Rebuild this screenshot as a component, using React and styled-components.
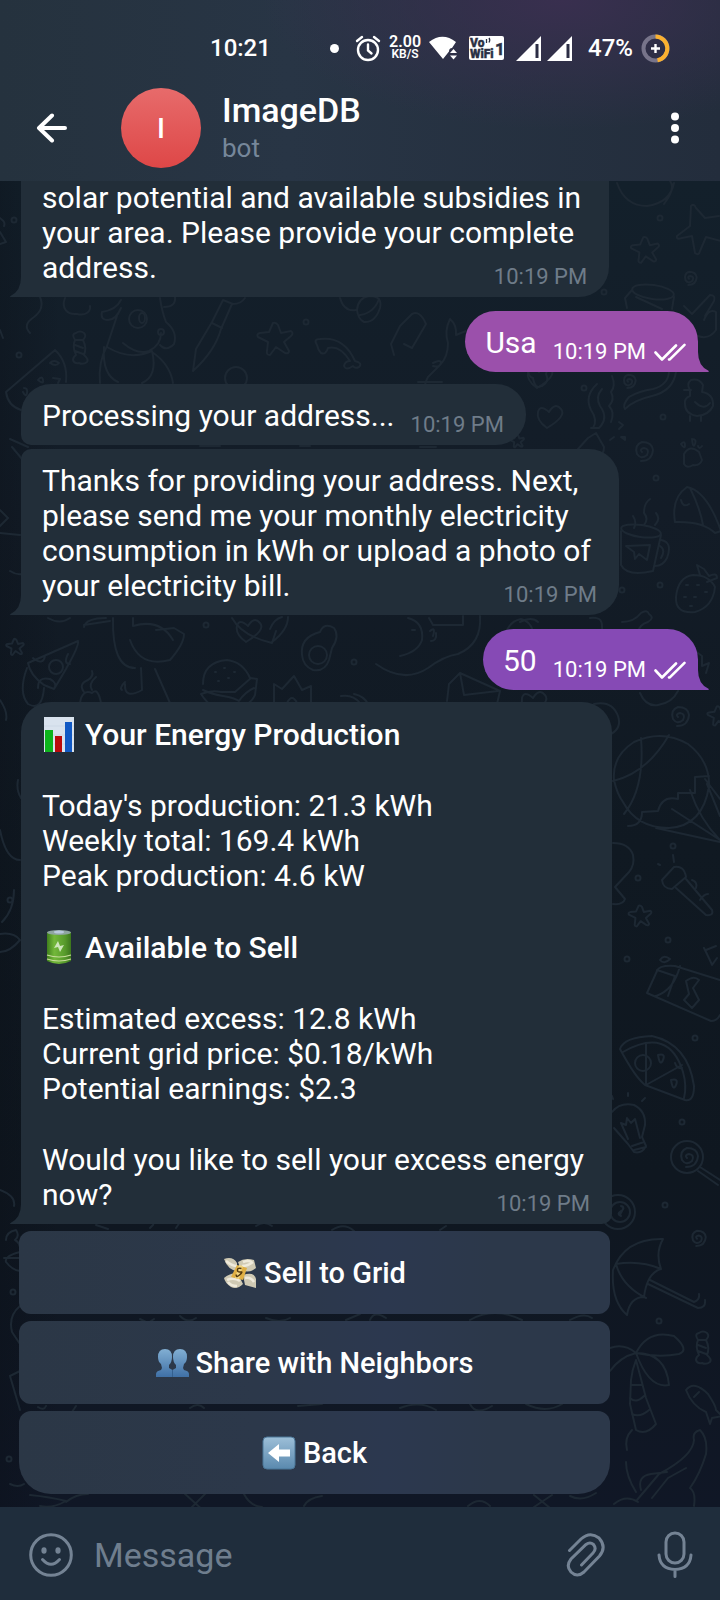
import React from "react";
import styled, { createGlobalStyle, css } from "styled-components";

const GlobalStyle = createGlobalStyle`
  *, *::before, *::after { box-sizing: border-box; }
  html, body { margin: 0; background: #101822; }
  body { font-family: Roboto, "Noto Sans", sans-serif; color: #fff; }
  button, input { font: inherit; color: inherit; }
`;

const App = styled.div`
  display: flex;
  flex-direction: column;
  height: 100vh;
  overflow: hidden;
`;

/* ---------- header ---------- */

const Header = styled.header`
  flex: none;
  background:
    radial-gradient(ellipse 300px 130px at 78% 0, #392f4f 0%, rgba(57, 47, 79, 0) 100%),
    linear-gradient(90deg, #25323e 0%, #283545 40%, #232d3c 100%);
`;

const StatusBar = styled.div`
  display: flex;
  align-items: center;
  justify-content: space-between;
  height: 75px;
  padding: 21px 50px 0 210px;
  font-size: 24px;
  line-height: 28px;
  font-weight: 500;
`;

const StatusIcons = styled.div`
  display: flex;
  align-items: center;
  gap: 12px;
`;

const IconGroup = styled.div`
  display: flex;
  align-items: center;
  gap: ${({ $gap = 8 }) => $gap}px;
  padding-left: ${({ $lead = 0 }) => $lead}px;
`;

const Speed = styled.div`
  display: flex;
  flex-direction: column;
  align-items: center;
  font-size: 16px;
  line-height: 12px;
  font-weight: 600;
`;

const SpeedUnit = styled.span`
  font-size: 12px;
`;

const TitleBar = styled.div`
  display: flex;
  align-items: center;
  height: 106px;
  padding: 0 29px 0 30px;
`;

const IconButton = styled.button`
  display: flex;
  align-items: center;
  justify-content: center;
  flex: none;
  width: ${({ $width = 44 }) => $width}px;
  height: 48px;
  padding: 0;
  border: 0;
  background: none;
  cursor: pointer;
`;

const Avatar = styled.div`
  display: flex;
  align-items: center;
  justify-content: center;
  flex: none;
  width: 80px;
  height: 80px;
  margin: 0 21px 0 47px;
  border-radius: 50%;
  background: linear-gradient(#e76b6b, #de4747);
  font-size: 28px;
  font-weight: 500;
`;

const Identity = styled.div`
  flex: 1;
  min-width: 0;
`;

const Name = styled.h1`
  margin: 0;
  font-size: 34px;
  line-height: 40px;
  font-weight: 500;
`;

const Role = styled.p`
  margin: 0;
  font-size: 26px;
  line-height: 36px;
  color: #76879a;
`;

/* ---------- conversation ---------- */

const Chat = styled.main`
  position: relative;
  display: flex;
  flex: 1;
  flex-direction: column;
  justify-content: flex-end;
  min-height: 0;
  padding: 0 22px 13px 21px;
  overflow: hidden;
  background:
    linear-gradient(90deg, rgba(9, 13, 20, 0.3) 0, rgba(9, 13, 20, 0) 60px),
    linear-gradient(180deg, #13202b 0%, #131c27 25%, #101922 50%, #0f1720 75%, #101726 100%);
`;

const Wallpaper = styled.svg`
  position: absolute;
  inset: 0;
  width: 100%;
  height: 100%;
  fill: none;
  stroke: #1d2833;
  stroke-width: 2;
  stroke-linecap: round;
  stroke-linejoin: round;
`;

const SENT_GAP = 14;
const RECEIVED_GAP = 12;
const GROUP_GAP = 4;

const Bubble = styled.article`
  position: relative;
  display: grid;
  align-self: flex-start;
  flex: none;
  max-width: calc(100% - 60px);
  margin-top: ${({ $grouped }) => ($grouped ? GROUP_GAP : RECEIVED_GAP)}px;
  padding: 14px 28px 12px 21px;
  border-radius: ${({ $radius = "30px 30px 30px 0" }) => $radius};
  background: #222e39;
  font-size: 30px;
  line-height: 35px;

  ${({ $inline }) =>
    $inline &&
    css`
      grid-template-columns: auto auto;
      column-gap: 16px;
    `}

  ${({ $cut }) =>
    $cut &&
    css`
      margin-top: 0;
      padding-top: 2px;
    `}
`;

const SentBubble = styled(Bubble)`
  align-self: flex-end;
  margin-top: ${SENT_GAP}px;
  padding-right: 12px;
  padding-left: 20px;
  border-radius: 31px 31px 0 31px;
  background: ${({ $tint }) => $tint};
`;

const Text = styled.div`
  display: flex;
  flex-direction: column;
  grid-area: 1 / 1;
  gap: 36px;
`;

const Paragraph = styled.p`
  margin: 0;
`;

const Line = styled.span`
  display: block;
  width: fit-content;
`;

const Heading = styled.h2`
  display: flex;
  align-items: center;
  gap: 9px;
  margin: 0;
  font-size: 30px;
  line-height: 35px;
  font-weight: 500;
`;

const Stamp = styled.div`
  display: flex;
  align-items: center;
  grid-area: ${({ $inline }) => ($inline ? "1 / 2" : "1 / 1")};
  align-self: end;
  justify-self: end;
  gap: 8px;
  margin: 0 -6px -5px 0;
  font-size: 22px;
  line-height: 26px;
  color: #6f7c89;
`;

const SentStamp = styled(Stamp)`
  margin-right: 0;
  color: #fff;
`;

const Tail = styled.svg`
  position: absolute;
  bottom: 0;
  ${({ $side }) => ($side === "right" ? "left: 100%;" : "right: 100%;")}
  width: 11px;
  height: 20px;
`;

const Keyboard = styled.div`
  position: relative;
  display: flex;
  flex: none;
  flex-direction: column;
  gap: 7px;
  width: 591px;
  max-width: 100%;
  margin: 7px 0 0 -2px;
`;

const ReplyButton = styled.button`
  display: flex;
  align-items: center;
  justify-content: center;
  gap: 7px;
  height: 83px;
  padding: 0;
  border: 0;
  border-radius: 12px;
  background: linear-gradient(90deg, #2b3746 0%, #2c384a 40%, #2c384f 62%, #2c384a 80%);
  font-size: 29px;
  font-weight: 500;
  cursor: pointer;

  &:last-child {
    border-radius: 12px 12px 32px 32px;
  }
`;

/* ---------- composer ---------- */

const Composer = styled.form`
  display: flex;
  align-items: center;
  flex: none;
  height: 93px;
  padding: 2px 23px 0 29px;
  background: #1f2d3c;
  color: #748394;
`;

const MessageInput = styled.input`
  flex: 1;
  min-width: 0;
  margin: 0 21px;
  padding: 0;
  border: 0;
  outline: 0;
  background: none;
  font-size: 34px;
  line-height: 40px;

  &::placeholder {
    color: #6f7e8e;
    opacity: 1;
  }
`;

const ComposerActions = styled.div`
  display: flex;
  gap: 45px;
`;

/* ---------- icons ---------- */

const AlarmIcon = () => (
  <svg width="26" height="27" viewBox="0 0 26 27" fill="none" stroke="#fff" strokeWidth="2.4" strokeLinecap="round">
    <circle cx="13" cy="15" r="10" />
    <path d="M13 9.5v6l3.5 3M2 6l5-4M24 6l-5-4" />
  </svg>
);

const WifiIcon = () => (
  <svg width="28" height="24" viewBox="0 0 28 24" fill="#fff">
    <path d="M0 6Q13.500-4.500 27 6L23 12Q20 12 20 15.500L14 23Z" />
    <path d="M21 17l3.500-4 3.500 4zM21 19.500l3.500 4 3.500-4z" />
  </svg>
);

const BadgeIcon = () => (
  <svg width="35" height="24" viewBox="0 0 35 24">
    <rect width="35" height="24" rx="2" fill="#fff" />
    <g fill="#2b3044" stroke="#2b3044" strokeWidth="0.4" fontFamily="Roboto, sans-serif" fontWeight="900">
      <text x="1" y="11" fontSize="12">Vo</text>
      <text x="1" y="22" fontSize="12">WiFi</text>
      <text x="26" y="19" fontSize="17" fontWeight="700">1</text>
    </g>
    <path d="M17.500 3v4M20 2q1.500 2 0 4.500" fill="none" stroke="#2b3044" strokeWidth="1.300" />
  </svg>
);

const SignalIcon = () => (
  <svg width="25" height="25" viewBox="0 0 25 25">
    <path d="M0 25L25 0V25Z" fill="#fff" />
    <path d="M21 8V22" stroke="#2b2d44" strokeWidth="3" />
  </svg>
);

const BatteryRing = () => (
  <svg width="29" height="29" viewBox="0 0 29 29" fill="none">
    <circle cx="14.5" cy="14.5" r="12" stroke="#77748a" strokeWidth="4" />
    <path d="M14.500 2.500A12 12 0 0 1 16.500 26.300" stroke="#fbb130" strokeWidth="4" />
    <path d="M14.500 10v9M10 14.500h9" stroke="#fff" strokeWidth="2.400" />
  </svg>
);

const BackArrow = () => (
  <svg width="32" height="30" viewBox="0 0 32 30" fill="none" stroke="#fff" strokeWidth="4" strokeLinecap="round" strokeLinejoin="round">
    <path d="M16 2.500L3 15l13 12.500M3 15h26" />
  </svg>
);

const DotsIcon = () => (
  <svg width="8" height="32" viewBox="0 0 8 32" fill="#fff">
    <circle cx="4" cy="4.5" r="4" />
    <circle cx="4" cy="16" r="4" />
    <circle cx="4" cy="27.5" r="4" />
  </svg>
);

const DoubleCheck = () => (
  <svg width="32" height="19" viewBox="0 0 32 19" fill="none" stroke="#fff" strokeWidth="2.600" strokeLinecap="round" strokeLinejoin="round">
    <path d="M1.500 9.500l6.500 7L22 2.500M15 16.500l.8-.1L30.500 1.800" />
  </svg>
);

const ReceivedTail = ({ fill = "#222e39" }) => (
  <Tail $side="left" viewBox="0 0 11 20" fill={fill}>
    <path d="M11 0V20H1Q-.5 20 .5 19Q11 14 11 0Z" />
  </Tail>
);

const SentTail = ({ fill }) => (
  <Tail $side="right" viewBox="0 0 11 20" fill={fill}>
    <path d="M0 0V20H10Q11.500 20 10.500 18.800Q0 14 0 0Z" />
  </Tail>
);

const SmileIcon = () => (
  <svg width="44" height="44" viewBox="0 0 44 44" fill="none" stroke="currentColor" strokeWidth="3" strokeLinecap="round">
    <circle cx="22" cy="22" r="20.300" />
    <path d="M13.500 26.500q8.500 9.500 17 0" />
    <ellipse cx="15" cy="17.500" rx="2.600" ry="3.200" fill="currentColor" stroke="none" />
    <ellipse cx="29" cy="17.500" rx="2.600" ry="3.200" fill="currentColor" stroke="none" />
  </svg>
);

const ClipIcon = () => (
  <svg width="40" height="46" viewBox="0 0 40 46" fill="none" stroke="currentColor" strokeWidth="3" strokeLinecap="round">
    <path d="M3.500 18.500L15 7Q24-1 33 6Q41 15 33.500 24L18 40Q11 46 5 40Q-.5 34 5 27L20 12.500Q24 9.500 27.500 12.500Q31 17 27 21L15.500 33" />
  </svg>
);

const MicIcon = () => (
  <svg width="36" height="48" viewBox="0 0 36 48" fill="none" stroke="currentColor" strokeWidth="3" strokeLinecap="round">
    <rect x="9" y="2" width="18" height="30" rx="9" />
    <path d="M2 24q1 14 16 14.500Q33 38 34 24M18 38.500v7" />
  </svg>
);

const ChartEmoji = () => (
  <svg width="34" height="36" viewBox="0 0 34 36">
    <rect x="2" y="1" width="30" height="35" fill="#d9e3ee" />
    <path d="M2 10h30M2 19h30M2 28h30" stroke="#cdd9e6" />
    <rect x="3" y="14" width="8" height="22" fill="#0db41c" />
    <rect x="13" y="20" width="7" height="16" fill="#ba0b0b" />
    <rect x="23" y="6" width="7" height="30" fill="#1159c4" />
  </svg>
);

const BatteryEmoji = () => (
  <svg width="34" height="36" viewBox="0 0 34 36">
    <defs>
      <linearGradient id="cell" x1="0" x2="1">
        <stop offset="0" stopColor="#3f7f1c" />
        <stop offset="0.3" stopColor="#73b83a" />
        <stop offset="0.75" stopColor="#579a2b" />
        <stop offset="1" stopColor="#3c761c" />
      </linearGradient>
    </defs>
    <path d="M5 3v29q12 6 24 0V3z" fill="url(#cell)" />
    <ellipse cx="17" cy="3.500" rx="12" ry="2.500" fill="#8fa6a0" />
    <ellipse cx="17" cy="3" rx="5" ry="1.500" fill="#b9c9dc" />
    <path d="M5 26q12 4 24 0M5 30q12 4 24 0" fill="none" stroke="#c8dd9c" strokeWidth="1.200" />
    <path d="M16 12l-4 7 4-1 2 5 4-7-4 1z" fill="#cfe6bb" />
  </svg>
);

const MoneyEmoji = () => (
  <svg width="34" height="32" viewBox="0 0 34 32">
    <path d="M1 2Q10-1 14 6L14 14Q5 13 1 2ZM15 5Q22 0 31 3L33 11Q26 17 18 13ZM1 21Q8 15 15 17L20 27Q14 33 8 30Q2 26 1 21ZM20 18Q31 14 33 22V31L22 28Z" fill="#cfc9b3" />
    <path d="M3 4q6 5 11 5M19 9q6 0 11-4M4 23q7-3 13 1M22 21q6-1 9 4M14 29q-6 0-9-4M20 5q5-2 9 0" fill="none" stroke="#efeadb" strokeWidth="2.500" />
    <path d="M14 8l10 3-4 12-12-3z" fill="#e0af43" />
    <path d="M16 8l4 1-4 13-4-1z" fill="#f3d782" />
    <path d="M18.500 11.500q-4-1-4 1.500t3 2-1 3-3-.5" fill="none" stroke="#54390e" strokeWidth="1.500" />
  </svg>
);

const PeopleEmoji = () => (
  <svg width="33" height="30" viewBox="0 0 33 30">
    <defs>
      <linearGradient id="bust" x2="0" y2="1">
        <stop offset="0" stopColor="#82afd3" />
        <stop offset="1" stopColor="#3f70a6" />
      </linearGradient>
    </defs>
    <path d="M0 29v-3q0-3 5-4l1-2-1-4Q2 14 2 9Q2 1 9 1t7 8q0 5-3 8v3l3.500 2 3.500-2v-3q-3-3-3-8 0-8 7-8t7 8q0 5-3 7l-1 4 1 2q5 1 5 4v3z" fill="url(#bust)" />
    <path d="M16.500 22v7" stroke="#34608f" strokeWidth="1" />
  </svg>
);

const BackEmoji = () => (
  <svg width="34" height="34" viewBox="0 0 34 34">
    <defs>
      <linearGradient id="key" x2="0" y2="1">
        <stop offset="0" stopColor="#9dbfd8" />
        <stop offset="1" stopColor="#5a89ae" />
      </linearGradient>
    </defs>
    <rect x="1" y="1" width="32" height="32" rx="4" fill="url(#key)" stroke="#4b7698" />
    <path d="M6 17L17 8v5.500h11v7H17V26z" fill="#fff" />
  </svg>
);

/* ---------- wallpaper doodles ---------- */

const Star = ({ x, y, s = 1 }) => (
  <path transform={`translate(${x} ${y}) scale(${s})`} vectorEffect="non-scaling-stroke"
    d="M-2-16q3-1 5 2l3 8 10-2q3 2 0 5l-7 6 5 9q0 3-4 2l-9-6-6 8q-4 0-3-4l1-9-10-5q-2-3 2-4l9-1z" />
);
const Heart = ({ x, y }) => <path transform={`translate(${x} ${y})`} d="M-3 12Q-14 4-12-4T-1-4Q5-14 11-7T-3 12Z" />;
const Spiral = ({ x, y, s = 1 }) => (
  <path transform={`translate(${x} ${y}) scale(${s})`} vectorEffect="non-scaling-stroke"
    d="M0 1q-3-3 2-4 6 1 3 7-6 5-10-1-3-9 5-12 10 0 11 8-1 11-12 11" />
);
const Candy = ({ x, y }) => (
  <path transform={`translate(${x} ${y})`} d="M-5-8q-4-6 1-7 4-3 8 0 3 3-1 7 4 8 1 15 5 4 3 7-4 3-8 1-5 1-6-3 0-3 3-5-4-8-1-15zM-5-3l8 3M-5 3l8 3M-5-8h8" />
);
const SPECKS = [
  [306, 322], [19, 355], [660, 218], [604, 292], [663, 417], [584, 388], [206, 625], [354, 662],
  [656, 478], [660, 585], [622, 590], [673, 846], [638, 878], [668, 940], [627, 959], [695, 1038],
  [682, 1122], [665, 1205], [659, 1321], [9, 1459], [13, 1292], [10, 900], [14, 220],
];

const Doodles = () => (
  <Wallpaper viewBox="0 181 720 1326" preserveAspectRatio="xMidYMin slice" aria-hidden="true">
    {SPECKS.map(([x, y]) => <circle key={`${x}-${y}`} cx={x} cy={y} r="2.500" />)}
    <Star x={275} y={339} /> <Star x={645} y={250} s={0.8} /> <Star x={15} y={647} s={0.5} />
    <Star x={640} y={916} s={0.65} /> <Star x={517} y={441} s={0.4} /> <Star x={718} y={716} s={0.6} />
    <Spiral x={689} y={278} s={0.7} /> <Spiral x={642} y={451} /> <Spiral x={628} y={381} s={0.7} />
    <Spiral x={678} y={716} /> <Spiral x={697} y={1238} s={0.8} /> <Spiral x={687} y={1157} />
    <Heart x={550} y={416} /> <Heart x={249} y={630} /> <Heart x={534} y={702} /> <Heart x={540} y={376} />
    <Candy x={80} y={348} /> <Candy x={703} y={1348} />

    <path d="M40 297q5 12-6 20-12 8-4 16M65 298c-4 10 2 17 12 16 8 2 14-2 13-8" />
    <path d="M121 300q-5 10-19 12-2 8 6 8 8 0 13-12M160 298q2 14 6 24 12 10 8 22-8 8-14 1M117 316l-10 30q-9 16-7 37M107 347q23 14 45 4 6 25-10 32M104 347q-2 28 14 35M123 343q14 12 26 8 12-6 12-18M152 352q18 12 21 31M164 307q12 0 11-10" />
    <circle cx="138" cy="319" r="9" /> <ellipse cx="142" cy="318" rx="3" ry="5" /> <circle cx="161" cy="332" r="3" />
    <path d="M193 371l3-22 16-27 11-22M193 371q22-20 28-42l11-25M212 323l10 5M223 300l10 4q8 0 12-6" />
    <path d="M317 345q-4-6 3-6 24-3 35 22 8 2 4 6-4 2-6-1-7 5-9 0 1-5 6-5-10-16-22-13-2 7-7 5-3-3-4-8z" />
    <path d="M55 350L6 392q2 14 15 18M55 350q13 12 11 32M50 363q4-4 9 0-3 4-9 0M38 380q4-5 5 0t-5 0M53 378l7 1-2 4M24 388q4 0 3 5t-4-1" />
    <circle cx="236" cy="378" r="11" /> <path d="M340 298q4 14 16 12M357 310q1-12 12-14 14 0 11 12-5 15-16 14-6-3-7-12zM360 315q14-2 19-16M394 355l-3-11 9-18 12-12q8-4 14 10l-14 24-8-4" />
    <path d="M448 343q-4-12 2-24 7 6 6 16l10-4M448 343q0 14-8 22l-12 12q-6 10 0 16M433 363q8-4 8 0-2 5-8 3M418 382h24" />
    <path d="M530 366q-4 10 3 12 2 12 9 8 8-4 4-12 3-8-4-7" />

    <path d="M617 183q8 23 30 23 23-3 27-23M664 204q12-16 6-23" />
    <path d="M691 206q3-3 5 2l9 10 14-2M691 206l-1 20-13 10q-1 4 5 2l10-2 3 17q4 3 5-2l6-14 15 4" />
    <ellipse cx="653" cy="292" rx="21" ry="7" transform="rotate(8 653 292)" /> <path d="M632 290l-7 8 2 10M674 297l-2 12M636 297l26 12M684 306q4 4 8 8l18-19q6 0 4 6l-9 15M704 320q5-12 12-8v18q-7 10-18 6" />
    <path d="M676 372q-3 19-24 24-18 4-27 13-3-4 4-12 10-6 24-8 15-4 16-17M612 376q4 10-1 16 4 8-2 14 6 6 2 16M597 384q-13 12-6 26 7 10 2 18M602 389q-7 8-2 17 9 12-1 22h-8" />
    <path d="M588 438l8-5 8 14q0 8-6 10M588 438l-10 11M619 422l4 3-4 4M610 440l4-3M621 437h4v3z" />
    <path d="M690 390q-4-6 1-10 8-2 12 5l-1 7q12 2 11 14-4 9-16 10-12-2-12-12-1-6 5-8zM684 390h7M695 402q9 9 15 1M690 416v5M701 416v5" />
    <path d="M684 454q6-10 15-2l3 8q-2 6-9 5-6 4-9-1zM681 444q4-4 4 1t-4-1M692 439q5 0 3 5t-3-5M702 446q-3 4-4 0" />
    <path d="M675 522q-4-24 12-35 20 4 34 44l-6 2q-12-12-40-11zM690 488q10 20 13 37M681 500q2 8 8 4" />
    <ellipse cx="641" cy="531" rx="20" ry="6" transform="rotate(8 641 531)" />
    <path d="M621 531v34q6 12 32 6l8-36M661 540q12 2 6 18-4 8-12 8M660 546q6 4 1 12M626 546l24-1-3 15-8-6-4 5-1-7zM634 528q3-6-1-12M644 525q5-6 0-12 0-10 6-14M655 525q6-6 1-12" />
    <path d="M676 597q2-20 17-22 16 0 22 12-2 20-20 25-20 2-19-15zM700 575l-3-10 7 4 5 7q8-4 8 2l-10 4M686 585h2M697 585h2M705 592h2M684 597h2M694 597h2M690 606h2" />
    <path d="M622 622q12 0 19-9 6-4 8 1 6 4-1 8-8 2-10 10M590 618q12-2 12 8t4 4" />

    <path d="M48 618q12 7 22 0M113 618q-1 50 22 50M133 618v8q27-8 40 14M130 640q10 28 40 20 14-16 14-26l-10-6-18 2M84 625l26-4M141 668l1 22q-18 10-17-6M155 669l15 34M125 682q-6 6-3 8M106 618q-20 0-22 9" />
    <path d="M28 663l50-22q2 6-24 48l-10-4Q30 675 28 663zM68 654q-5 10 2 10M33 658q10 8 12-2M38 688q0-12 12-9 8 4 4 10M27 668Q18 692 28 704q14 8 16-16" /><circle cx="56" cy="667" r="7" />
    <path d="M84 692q-6-8 4-12 6-4 4-9M92 690q-4-6 4-13M80 703q2-14 12-10 6-6 9 10" />
    <path d="M232 618q10 18 40 25l4-12M272 642q16-12 16-25M270 629q4-10 12-12" />
    <path d="M203 684q0-22 24-24 16 2 23 18l7 1-2 16q-4 10-22 16-20 2-32-17 10-4 20-2l14 0 16-14M203 690q8 4 20 6t16 5q6-9 15-13M215 672h1M224 668h1M234 672h1M228 678h1M218 681h1" />
    <path d="M302 655q-2-18 18-23 4-10 14-4 6 8-2 20l-3 12q-4 12-16 10-10-4-11-15z" /><circle cx="318" cy="655" r="9" />
    <path d="M274 703v-19l8 5 12-13 8 14 9-4v17M287 703q5-10 10 0M341 696q12-2 19 7M354 694q10 2 14 10" />
    <path d="M480 616q2 28-22 38-14 2-30 14-24 16-52-4M400 656q18-4 22-16 2-18-14-22M429 618l4 7h30v-9M412 630h3M430 631q6-5 3 5M431 641q6 0 5-8" />
    <path d="M447 701l2-17 11-11 40 18-3 13M460 673l4 22 34-4M507 630q4-9 14-11 9 2 12 12M520 622q12-6 18 0M640 693q6 14 18 12 14-2 20-14M694 650l8 6 0 10 7-3-3 10" />
    <path d="M594 704q18-4 24 12 4 12-7 18" />

    <path d="M614 780q-2-24 20-38 28-13 54 2 22 17 21 42-6 40-40 42-32 0-46-26-6-8-9-22zM613 781q34-8 56-46M641 738q4 50-17 76M709 776l-14 1 0 16h-17l0 6q-16-4-20 12l-16 1q0 14-14 14M656 828l64 14M705 779l15 20M707 784l13 32M690 790q10 30 30 50M672 809l48 31" />
    <path d="M613 843q16 0 20 12 2 10-4 17l-14 15 10 12q-2 6-12 5" />
    <path d="M662 880l12-13q10-2 12 10l-14 12q-9 0-10-9zM686 879l26 31q2 6-6 5l-30-27M692 880q6 2 4 8M700 900q4-6 8-6M674 862l-1-7M660 865l-2-1" />
    <path d="M647 993l10-22q2-6 18-5l45 14M647 993l64 28q6 0 9-6M657 970l18 6-7 20M680 966q-6 24-24 30M686 981q8-6 13-1l-6 8 6 12-7 8-8-8 5-6zM706 950l10-4M704 948q6 12 8 17l5-7M660 960q4-6 10-1-6 6-10 1" />
    <path d="M620 1049q4-12 32-13 36 8 42 50 0 16-9 14l-40-15q-10-8-25-36zM623 1052q46-26 60 20 4 14 1 26M646 1044v41l36-20" /><circle cx="643" cy="1063" r="8" /><path d="M658 1055q8-2 5 5t-5-5M671 1080q8-2 5 5t-5-5M675 1063q2 6 7 5" />
    <path d="M612 1112q8-10 22-7 12 6 11 20l-3 12 4 9q-4 8-12 6l-6-8-14-16M632 1146l12-4M634 1150l12-3M628 1139l-7-16 5 2 1-7 4 5 4-4 5 19M613 1099l-1-3M628 1096v-3M642 1101l3-3" />
    <circle cx="687" cy="1157" r="16" /> <path d="M700 1167l20 13M698 1171l20 14" />
    <circle cx="618" cy="1212" r="17" /> <circle cx="620" cy="1212" r="10" /> <path d="M621 1206q4 0 1 5t-1 5q-5-2 0-5t0-5" />
    <path d="M613 1270q12-32 50-31-8 14-2 30-14 4-17 28-14 0-17 18-16-14-14-45zM616 1264q24-4 45 5M616 1264q6 22 30 34M650 1280l44 22q6-2 5-8M648 1284l50 24q8 0 7-8" />
    <path d="M636 1353q12-24 38-17 16 14 5 18-20 4-43-1zM636 1353q30 0 33 32-20 4-33-32zM636 1353q-12-10-26-5M636 1353q-16 4-26 18M636 1360q-4 10-5 20l-1 24 6 26q10 6 20-6l-10-26-10-38M631 1385h10M630 1398q6 6 14-2M632 1414q8 4 17-4M632 1430q-8 8-5 20M626 1462q0 14 10 30" />
    <path d="M686 1390q8-10 22 4 8 12 8 16l6 6-10 2-2 6-4-12q-14-6-20-22zM694 1397l5-5" />
    <path d="M637 1500l22-26q34-18 35-34-2-8 6-10 8 8 6 24-6 20-16 34 6 4 4 18M641 1490q-4-14 10-16l16-2M652 1498l16-20 18-10" />

    <path d="M0 218q6 4 4 8M0 232l6 10-6 2M0 330l3 8M0 510l8 8-8 8M0 533l20 2M10 571q6 4 12 3M0 700q8 12 6 20M18 780q-2 10 3 18M0 830q6 30 20 30M14 890q0 20-12 32M0 934q14-2 20 6-10 12-20 12M0 1190q16 6 14 16" />
    <path d="M6 1240q0-8 10-10 4 6-1 10 6 3 5 12Q4 1256 6 1262q6 8 14 9M4 1258h16M20 1306q-12 10-8 26l8 12M10 1376l12-6M10 1376l10 34M10 1484q8 4 14 0M30 1495q20 2 36 6-14 8-26 5M66 1502q10-8 22-8M184 1493l22 20M206 1493l-16 16M244 1494q6 12 18 13M304 1506q4-8 18-10M534 1495l16 13M552 1495l-18 12M468 1506q12-10 22 0M570 1496q12 6 26-3M614 1504q12-10 24-2" />
    <path d="M96 1225l12 4M150 1228q4-4 3-3M176 1228l4-6M256 1226q8-6 16 0M332 1230q12-8 22 1M440 1230l6-4M140 1319l8 4 6-4M180 1316q8 8 16 2M266 1318q14 6 24 0M346 1320l14-6M370 1320q4-10 16-2M470 1320q24-14 52 0M570 1320q14-8 22-2M38 1407q6 4 8-1M76 1406l-4 6M190 1408q8-6 14 0M298 1406l24-2M400 1408q20-8 36 2M470 1404q6 12 22 2M526 1404q20 10 36 0" />
    <path d="M28 447l-18-8M12 447l10 12M200 446h20M420 447h16M300 446h10" />
  </Wallpaper>
);

/* ---------- screen ---------- */

const Lines = ({ of }) => (
  <Paragraph>
    {of.map((line) => <Line key={line}>{line}</Line>)}
  </Paragraph>
);

const Received = ({ time, inline, children, tail = true, ...rest }) => (
  <Bubble $inline={inline} {...rest}>
    <Text>{children}</Text>
    <Stamp as="time" $inline={inline}>{time}</Stamp>
    {tail && <ReceivedTail />}
  </Bubble>
);

const Sent = ({ time, tint, children }) => (
  <SentBubble $inline $tint={tint}>
    <Text><Paragraph>{children}</Paragraph></Text>
    <SentStamp $inline>
      <time>{time}</time>
      <DoubleCheck />
    </SentStamp>
    <SentTail fill={tint} />
  </SentBubble>
);

const REPLIES = [
  { label: "Sell to Grid", Icon: MoneyEmoji },
  { label: "Share with Neighbors", Icon: PeopleEmoji },
  { label: "Back", Icon: BackEmoji },
];

export default function TelegramChat() {
  return (
    <App>
      <GlobalStyle />
      <Header>
        <StatusBar>
          <span>10:21</span>
          <StatusIcons>
            <svg width="13" height="9" viewBox="0 0 13 9" fill="#fff"><circle cx="4.500" cy="4.500" r="4.500" /></svg>
            <IconGroup>
              <AlarmIcon />
              <Speed>2.00<SpeedUnit>KB/S</SpeedUnit></Speed>
              <WifiIcon />
            </IconGroup>
            <BadgeIcon />
            <IconGroup $gap={6}>
              <SignalIcon />
              <SignalIcon />
            </IconGroup>
            <IconGroup $lead={4}>
              <span>47%</span>
              <BatteryRing />
            </IconGroup>
          </StatusIcons>
        </StatusBar>
        <TitleBar>
          <IconButton type="button" aria-label="Go back"><BackArrow /></IconButton>
          <Avatar>I</Avatar>
          <Identity>
            <Name>ImageDB</Name>
            <Role>bot</Role>
          </Identity>
          <IconButton type="button" aria-label="More options" $width={32}><DotsIcon /></IconButton>
        </TitleBar>
      </Header>

      <Chat>
        <Doodles />
        <Received time="10:19 PM" $cut $radius="0 0 30px 0">
          <Lines of={["solar potential and available subsidies in", "your area. Please provide your complete", "address."]} />
        </Received>
        <Sent time="10:19 PM" tint="#9b50ab">Usa</Sent>
        <Received time="10:19 PM" inline tail={false} $radius="30px 30px 30px 10px">
          <Paragraph>Processing your address...</Paragraph>
        </Received>
        <Received time="10:19 PM" $grouped $radius="10px 30px 30px 0">
          <Lines
            of={[
              "Thanks for providing your address. Next,",
              "please send me your monthly electricity",
              "consumption in kWh or upload a photo of",
              "your electricity bill.",
            ]}
          />
        </Received>
        <Sent time="10:19 PM" tint="#864ab5">50</Sent>
        <Received time="10:19 PM" $radius="30px 30px 10px 0">
          <Heading><ChartEmoji />Your Energy Production</Heading>
          <Lines of={["Today's production: 21.3 kWh", "Weekly total: 169.4 kWh", "Peak production: 4.6 kW"]} />
          <Heading><BatteryEmoji />Available to Sell</Heading>
          <Lines of={["Estimated excess: 12.8 kWh", "Current grid price: $0.18/kWh", "Potential earnings: $2.3"]} />
          <Lines of={["Would you like to sell your excess energy", "now?"]} />
        </Received>
        <Keyboard>
          {REPLIES.map(({ label, Icon }) => (
            <ReplyButton key={label} type="button"><Icon />{label}</ReplyButton>
          ))}
        </Keyboard>
      </Chat>

      <Composer onSubmit={(event) => event.preventDefault()}>
        <IconButton type="button" aria-label="Emoji"><SmileIcon /></IconButton>
        <MessageInput type="text" placeholder="Message" aria-label="Message" />
        <ComposerActions>
          <IconButton type="button" aria-label="Attach file"><ClipIcon /></IconButton>
          <IconButton type="button" aria-label="Record voice message"><MicIcon /></IconButton>
        </ComposerActions>
      </Composer>
    </App>
  );
}
